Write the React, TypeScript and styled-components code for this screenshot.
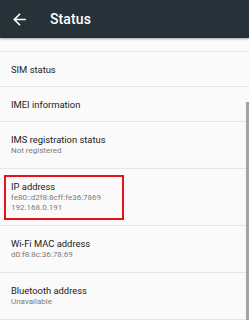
import styled, { createGlobalStyle } from "styled-components";

const GlobalStyle = createGlobalStyle`
  html, body {
    margin: 0;
    padding: 0;
    background: #fafafa;
    font-family: Roboto, "Noto Sans", sans-serif;
  }
`;

const Screen = styled.div`
  width: 249px;
  height: 320px;
  overflow: hidden;
  background: #fafafa;
  display: flex;
  flex-direction: column;
`;

const Toolbar = styled.header`
  height: 38px;
  flex-shrink: 0;
  background: #263238;
  display: flex;
  align-items: center;
  padding-left: 10px;
  gap: 21px;
  box-shadow: 0 1px 2px rgba(0, 0, 0, 0.35);
  position: relative;
  z-index: 1;
`;

const BackIcon = styled.svg`
  width: 19px;
  height: 19px;
  fill: #ffffff;
`;

const ToolbarTitle = styled.h1`
  margin: 0;
  font-size: 14px;
  font-weight: 500;
  color: #ffffff;
  letter-spacing: 0.1px;
`;

const List = styled.div`
  position: relative;
  flex: 1;
`;

const Spacer = styled.div`
  height: 13px;
  border-bottom: 1px solid #e6e6e6;
`;

const Item = styled.div<{ $multi?: boolean }>`
  position: relative;
  padding: 11px 11px ${(p) => (p.$multi ? "12px" : "10px")};
  border-bottom: 1px solid #e6e6e6;
`;

const Title = styled.div`
  font-size: 9.4px;
  line-height: 13px;
  color: #212121;
`;

const Sub = styled.div`
  font-size: 8px;
  line-height: 10px;
  color: #7a7a7a;
`;

const Highlight = styled.div`
  position: absolute;
  left: 4px;
  top: 6px;
  width: 116px;
  height: 41px;
  border: 2px solid #e3121b;
  pointer-events: none;
`;

const ScrollThumb = styled.div`
  position: absolute;
  right: 0;
  top: 64px;
  width: 3px;
  bottom: -10px;
  background: #a3a3a3;
`;

type Row = { title: string; lines?: string[]; marked?: boolean };

const rows: Row[] = [
  { title: "SIM status" },
  { title: "IMEI information" },
  { title: "IMS registration status", lines: ["Not registered"] },
  {
    title: "IP address",
    lines: ["fe80::d2f8:8cff:fe36:7869", "192.168.0.191"],
    marked: true,
  },
  { title: "Wi-Fi MAC address", lines: ["d0:f8:8c:36:78:69"] },
  { title: "Bluetooth address", lines: ["Unavailable"] },
];

export default function App() {
  return (
    <>
      <GlobalStyle />
      <Screen>
        <Toolbar>
          <BackIcon viewBox="0 0 24 24">
            <path d="M20 11H7.83l5.59-5.59L12 4l-8 8 8 8 1.41-1.41L7.83 13H20v-2z" />
          </BackIcon>
          <ToolbarTitle>Status</ToolbarTitle>
        </Toolbar>
        <List>
          <Spacer />
          {rows.map((r) => (
            <Item key={r.title} $multi={!!r.lines}>
              <Title>{r.title}</Title>
              {r.lines?.map((l) => (
                <Sub key={l}>{l}</Sub>
              ))}
              {r.marked && <Highlight />}
            </Item>
          ))}
          <ScrollThumb />
        </List>
      </Screen>
    </>
  );
}
